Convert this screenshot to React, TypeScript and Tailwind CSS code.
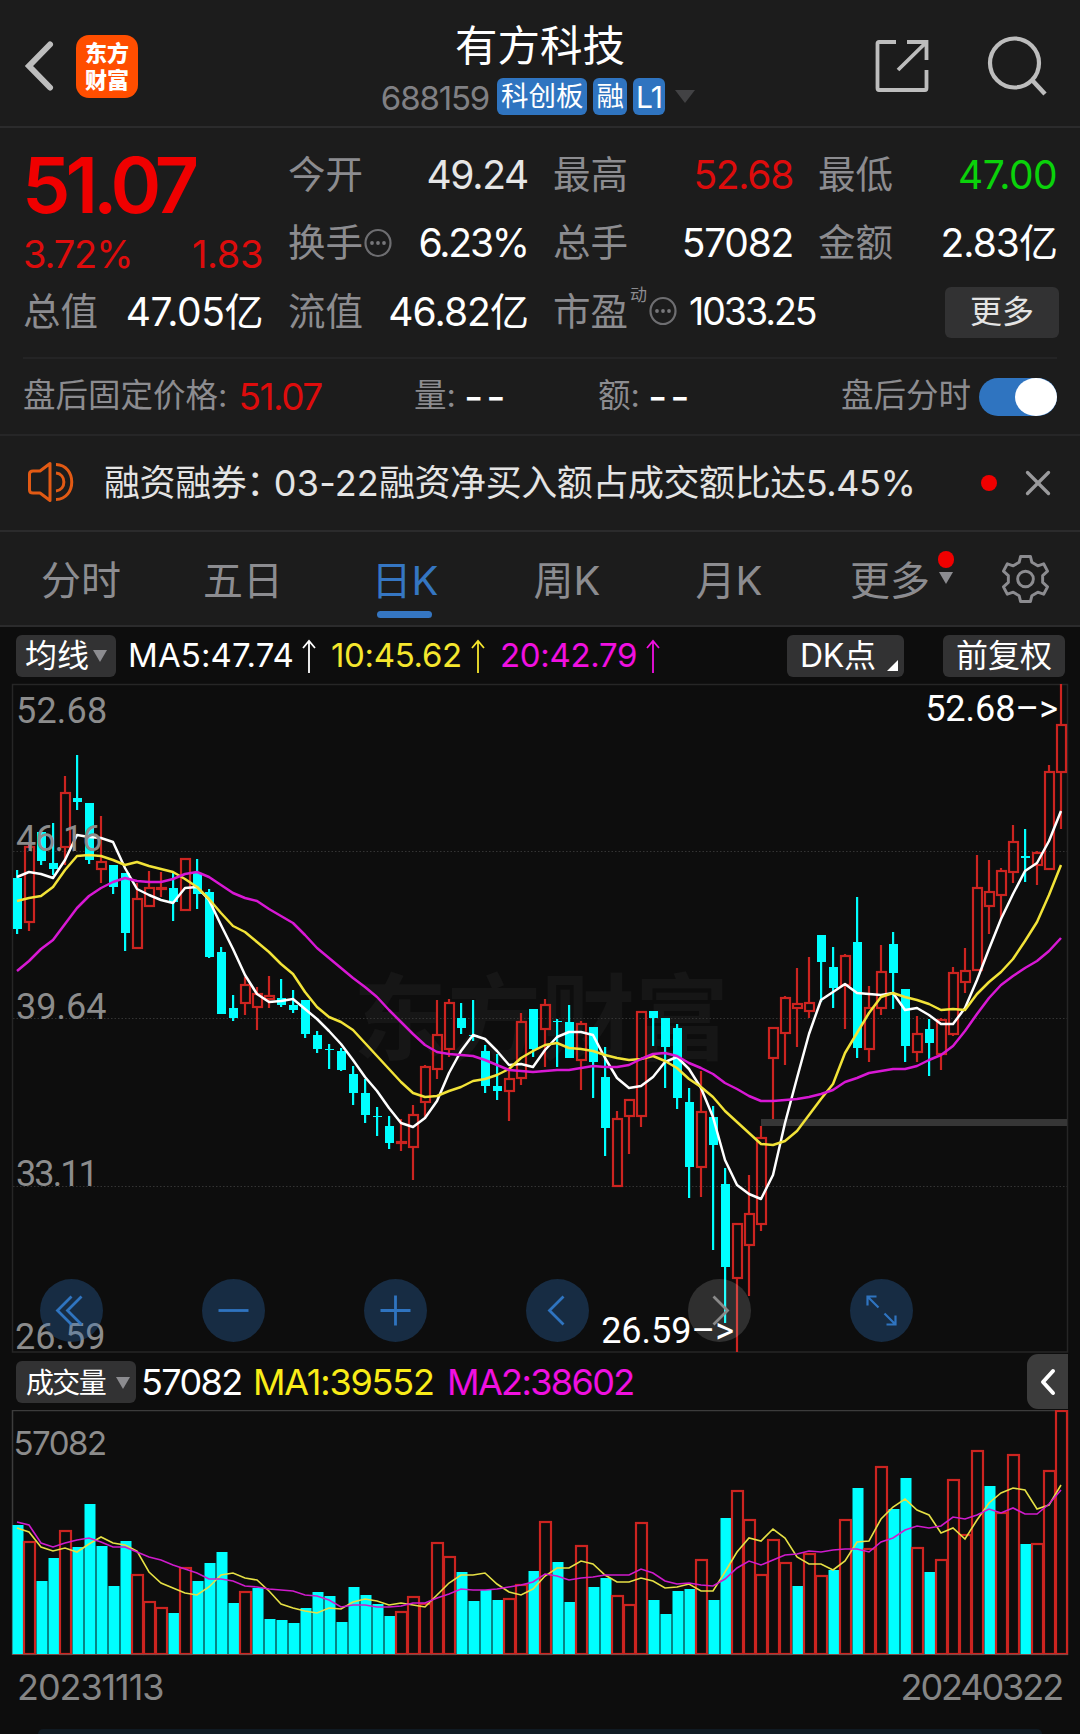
import { FiX } from "react-icons/fi";

// [direction, high, body top, body bottom, low, volume top]
const DAYS: [string, number, number, number, number, number][] = [
  ["d", 870, 878, 929, 934, 1525], ["u", 842, 847, 922, 931, 1542], ["d", 832, 832, 861, 865, 1581],
  ["d", 823, 863, 869, 875, 1558], ["u", 776, 793, 847, 865, 1531], ["d", 755, 798, 802, 810, 1547],
  ["d", 803, 803, 860, 864, 1504], ["u", 816, 862, 869, 883, 1546], ["d", 865, 865, 887, 894, 1586],
  ["d", 873, 873, 933, 951, 1541], ["u", 883, 899, 948, 949, 1575], ["u", 871, 888, 906, 906, 1602],
  ["u", 872, 888, 889, 897, 1608], ["d", 873, 888, 902, 921, 1613], ["u", 859, 859, 910, 910, 1568],
  ["d", 859, 873, 894, 909, 1581], ["d", 889, 892, 957, 958, 1563], ["d", 947, 952, 1014, 1014, 1552],
  ["d", 995, 1008, 1018, 1021, 1603], ["u", 977, 985, 1003, 1015, 1592], ["u", 987, 994, 1007, 1030, 1588],
  ["u", 976, 996, 999, 1008, 1619], ["d", 979, 998, 1005, 1007, 1620], ["d", 990, 1005, 1010, 1013, 1623],
  ["d", 1000, 1000, 1034, 1038, 1608], ["d", 1031, 1035, 1049, 1053, 1592], ["d", 1044, 1049, 1050, 1069, 1596],
  ["d", 1048, 1051, 1070, 1071, 1622], ["d", 1066, 1074, 1093, 1105, 1587], ["d", 1079, 1093, 1115, 1123, 1595],
  ["d", 1107, 1116, 1117, 1136, 1604], ["d", 1116, 1126, 1143, 1149, 1616], ["u", 1119, 1142, 1143, 1151, 1612],
  ["u", 1105, 1115, 1147, 1180, 1597], ["u", 1065, 1067, 1102, 1117, 1604], ["u", 1000, 1035, 1069, 1079, 1543],
  ["u", 999, 1003, 1049, 1057, 1557], ["d", 1003, 1018, 1028, 1034, 1572], ["d", 1000, 1035, 1036, 1041, 1601],
  ["d", 1045, 1051, 1086, 1093, 1590], ["d", 1054, 1086, 1091, 1100, 1600], ["u", 1070, 1079, 1091, 1121, 1599],
  ["u", 1013, 1022, 1078, 1085, 1585], ["d", 1009, 1009, 1049, 1057, 1571], ["u", 999, 1005, 1029, 1067, 1522],
  ["d", 1019, 1021, 1022, 1067, 1562], ["d", 1005, 1022, 1058, 1058, 1602], ["u", 1021, 1024, 1060, 1090, 1546],
  ["d", 1027, 1027, 1062, 1098, 1587], ["d", 1047, 1077, 1128, 1156, 1578], ["u", 1111, 1119, 1186, 1186, 1596],
  ["u", 1100, 1100, 1116, 1154, 1605], ["u", 1011, 1012, 1116, 1127, 1523], ["d", 1011, 1011, 1018, 1046, 1600],
  ["d", 1018, 1018, 1047, 1088, 1614], ["d", 1024, 1028, 1098, 1109, 1591], ["d", 1088, 1102, 1167, 1198, 1589],
  ["u", 1071, 1112, 1167, 1197, 1560], ["d", 1106, 1117, 1145, 1250, 1600], ["d", 1168, 1184, 1267, 1323, 1518],
  ["u", 1224, 1224, 1278, 1352, 1491], ["u", 1175, 1214, 1245, 1296, 1520], ["u", 1126, 1138, 1224, 1231, 1575],
  ["u", 1028, 1028, 1058, 1119, 1540], ["u", 996, 998, 1033, 1065, 1563], ["u", 968, 1004, 1008, 1047, 1586],
  ["u", 957, 1003, 1011, 1018, 1554], ["d", 935, 935, 962, 1002, 1576], ["d", 947, 967, 988, 1008, 1570],
  ["u", 954, 956, 985, 1029, 1520], ["d", 897, 942, 1048, 1058, 1488], ["u", 986, 1008, 1049, 1062, 1549],
  ["u", 945, 972, 1008, 1015, 1467], ["d", 932, 944, 973, 1009, 1509], ["d", 989, 989, 1046, 1062, 1478],
  ["u", 1016, 1034, 1052, 1062, 1548], ["d", 1019, 1029, 1043, 1076, 1572], ["u", 1018, 1020, 1054, 1070, 1560],
  ["u", 967, 973, 1034, 1036, 1480], ["u", 948, 971, 982, 993, 1535], ["u", 855, 888, 970, 970, 1451],
  ["u", 860, 892, 906, 934, 1486], ["u", 868, 871, 895, 920, 1513], ["u", 825, 842, 872, 883, 1455],
  ["d", 829, 856, 858, 882, 1544], ["u", 851, 853, 865, 885, 1544], ["u", 765, 772, 869, 869, 1471],
  ["u", 684, 725, 772, 829, 1411],
];

// volume bars are coloured by close against previous close, so they differ from the candles here and there
const VOLUME_DOWN = [
  0, 2, 3, 5, 6, 7, 8, 9, 13, 15, 16, 17, 18, 20, 21, 22, 23, 24, 25, 26, 27, 28, 29, 30, 31, 37, 38, 39, 40, 43,
  45, 46, 48, 49, 53, 54, 55, 56, 58, 59, 65, 68, 70, 73, 74, 76, 81, 84,
];

const MA5 = [
  877, 872, 874, 878, 860, 835, 837, 838, 842, 868, 889, 895, 900, 903, 888, 887, 900, 925, 949, 975, 994, 1002,
  1001, 999, 1009, 1019, 1031, 1044, 1060, 1077, 1091, 1108, 1123, 1127, 1118, 1101, 1073, 1051, 1035, 1039, 1051,
  1065, 1064, 1067, 1050, 1037, 1032, 1032, 1035, 1058, 1078, 1088, 1086, 1077, 1062, 1057, 1069, 1088, 1117, 1160,
  1185, 1194, 1199, 1175, 1123, 1078, 1034, 1000, 992, 984, 993, 994, 995, 993, 1010, 1008, 1015, 1024, 1024, 1008,
  980, 949, 919, 894, 871, 863, 841, 811,
];
const MA10 = [
  901, 898, 896, 887, 870, 856, 855, 856, 860, 865, 862, 866, 869, 872, 879, 887, 899, 913, 926, 932, 942, 952, 964,
  974, 992, 1007, 1017, 1022, 1030, 1043, 1056, 1069, 1082, 1093, 1097, 1096, 1091, 1087, 1081, 1079, 1075, 1069,
  1058, 1051, 1045, 1043, 1048, 1049, 1051, 1055, 1058, 1060, 1059, 1056, 1061, 1068, 1079, 1087, 1097, 1111, 1122,
  1133, 1144, 1145, 1141, 1131, 1115, 1099, 1084, 1053, 1033, 1013, 997, 993, 997, 1000, 1004, 1010, 1009, 1010, 994,
  982, 972, 959, 941, 922, 895, 865,
];
const MA20 = [
  971, 961, 949, 940, 924, 908, 896, 888, 882, 878, 881, 882, 882, 879, 874, 872, 877, 885, 893, 898, 901, 909, 916,
  923, 935, 948, 958, 968, 978, 987, 997, 1010, 1022, 1034, 1045, 1052, 1054, 1055, 1056, 1060, 1065, 1070, 1071,
  1072, 1071, 1070, 1070, 1068, 1066, 1067, 1067, 1065, 1059, 1054, 1053, 1056, 1063, 1068, 1074, 1083, 1089, 1096,
  1101, 1101, 1100, 1099, 1097, 1094, 1090, 1082, 1078, 1073, 1071, 1069, 1069, 1066, 1060, 1055, 1046, 1031, 1014,
  998, 985, 976, 968, 961, 951, 938,
];
const VOL_MA1 = [
  1528, 1532, 1547, 1551, 1548, 1552, 1544, 1537, 1543, 1545, 1551, 1572, 1583, 1588, 1593, 1595, 1587, 1575, 1573,
  1578, 1580, 1591, 1604, 1608, 1611, 1613, 1608, 1609, 1602, 1599, 1601, 1605, 1603, 1605, 1607, 1595, 1583, 1575,
  1575, 1573, 1584, 1592, 1595, 1589, 1576, 1568, 1568, 1561, 1564, 1575, 1582, 1582, 1578, 1581, 1588, 1587, 1584,
  1591, 1591, 1572, 1552, 1538, 1541, 1529, 1538, 1557, 1564, 1564, 1570, 1561, 1542, 1541, 1519, 1507, 1499, 1510,
  1515, 1533, 1528, 1539, 1520, 1503, 1493, 1488, 1490, 1509, 1505, 1485,
];
const VOL_MA2 = [
  1522, 1525, 1543, 1547, 1543, 1540, 1538, 1542, 1547, 1547, 1552, 1557, 1560, 1565, 1569, 1573, 1579, 1579, 1581,
  1586, 1587, 1589, 1590, 1591, 1595, 1596, 1600, 1607, 1605, 1605, 1607, 1607, 1606, 1603, 1603, 1598, 1594, 1589,
  1590, 1590, 1589, 1587, 1585, 1582, 1574, 1576, 1580, 1578, 1577, 1575, 1575, 1575, 1569, 1573, 1581, 1584, 1583,
  1585, 1586, 1579, 1568, 1561, 1565, 1560, 1555, 1554, 1551, 1552, 1550, 1549, 1549, 1552, 1542, 1538, 1530, 1526,
  1528, 1526, 1517, 1519, 1515, 1509, 1513, 1508, 1514, 1514, 1504, 1490,
];

const dayX = (i: number) => 17 + i * 12;
const linePoints = (values: number[]) => values.map((y, i) => `${dayX(i)},${y}`).join(" ");

const Header = () => (
  <header className="h-[128px] border-b-2 border-[#2b2b2c] flex relative">
    <svg className="ml-[22px] mt-[38px] shrink-0" width="36" height="56" viewBox="0 0 36 56">
      <path d="M28 6.500L7 28L28 49.500" fill="none" stroke="#bdbdbd" strokeWidth="6" strokeLinecap="round" />
    </svg>
    <div className="ml-[18px] mt-[35px] w-[62px] h-[63px] rounded-[13px] bg-[#ff4e00] flex flex-col items-center justify-center text-[22px] leading-[27px] font-black text-white">
      <span>东方</span>
      <span>财富</span>
    </div>
    <div className="absolute left-[340px] w-[400px] top-[15px] flex flex-col items-center">
      <h1 className="text-[42.500px] leading-[62px] text-white">有方科技</h1>
      <div className="flex items-center h-[38px] ml-[-4px]">
        <span className="text-[33px] leading-[36px] pt-[3px] tracking-[-0.035em] text-[#808084] mr-[8px]">688159</span>
        <span className="h-[37px] w-[90px] rounded-md bg-[#2f74c0] text-white text-[27.500px] leading-[37px] text-center mr-[6px]">
          科创板
        </span>
        <span className="h-[37px] w-[34px] rounded-md bg-[#2f74c0] text-white text-[27.500px] leading-[37px] text-center mr-[6px]">
          融
        </span>
        <span className="h-[37px] w-[32px] rounded-md bg-[#2f74c0] text-white text-[30px] leading-[38px] text-center tracking-tight">
          L1
        </span>
        <svg className="ml-[10px]" width="20" height="13">
          <path d="M0 0H20L10 13Z" fill="#424244" />
        </svg>
      </div>
    </div>
    <svg className="absolute left-[874px] top-[38px]" width="58" height="58" viewBox="0 0 58 58">
      <path
        d="M22 4H5Q3.500 4 3.500 5.500V50Q3.500 52 5 52H51Q52.500 52 52.500 50V32M33 4H52.500V22M52 4.500L24 32"
        fill="none"
        stroke="#bdbdbd"
        strokeWidth="3.800"
      />
    </svg>
    <svg className="absolute left-[986px] top-[34px]" width="64" height="64" viewBox="0 0 64 64">
      <circle cx="28.500" cy="29" r="24.500" fill="none" stroke="#bdbdbd" strokeWidth="4.200" />
      <path d="M46 46L59 60" stroke="#bdbdbd" strokeWidth="4.500" />
    </svg>
  </header>
);

const MoreDots = () => (
  <svg width="28" height="30" viewBox="0 0 28 30">
    <ellipse cx="14" cy="15" rx="12.500" ry="13" fill="none" stroke="#6e6e71" strokeWidth="2.200" />
    <circle cx="8" cy="15" r="1.900" fill="#77777a" />
    <circle cx="14" cy="15" r="1.900" fill="#77777a" />
    <circle cx="20" cy="15" r="1.900" fill="#77777a" />
  </svg>
);

const Stat = ({ label, value, color = "text-white", tracking = "tracking-[-0.033em]", dots = false }: any) => (
  <div className="flex items-center justify-between h-[68px] whitespace-nowrap">
    <span className="flex items-center text-[37.500px] text-[#8c8c90]">
      {label}
      {dots && <span className="ml-px"><MoreDots /></span>}
    </span>
    <span className={`text-[39px] ${tracking} ${color}`}>{value}</span>
  </div>
);

const Quote = () => (
  <section className="h-[229px] px-[23px]">
    <div className="pt-[13px] grid grid-cols-[240px_240px_240px_239px] gap-x-[25px]">
      <div className="h-[137px]">
        <div className="-ml-[1px] pt-px text-[77px] leading-[86px] font-semibold tracking-[-0.065em] text-[#f00000]">51.07</div>
        <div className="flex justify-between mt-[1px] text-[38px] leading-[50px] text-[#dd0c0c]">
          <span className="tracking-[-0.03em]">3.72%</span>
          <span className="tracking-[-0.01em]">1.83</span>
        </div>
      </div>
      <div>
        <Stat label="今开" value="49.24" color="text-[#e6e6e6]" />
        <Stat label="换手" value="6.23%" tracking="tracking-[-0.055em]" dots />
      </div>
      <div>
        <Stat label="最高" value="52.68" color="text-[#dd0c0c]" />
        <Stat label="总手" value="57082" />
      </div>
      <div>
        <Stat label="最低" value="47.00" color="text-[#0ad20a]" tracking="tracking-[-0.015em]" />
        <Stat label="金额" value="2.83亿" tracking="tracking-[-0.025em]" />
      </div>
      <Stat label="总值" value="47.05亿" tracking="tracking-[-0.012em]" />
      <Stat label="流值" value="46.82亿" tracking="tracking-[-0.024em]" />
      <div className="flex items-center h-[68px] whitespace-nowrap relative">
        <span className="text-[37.500px] text-[#8c8c90]">市盈</span>
        <span className="absolute left-[77px] top-[5px] text-[17px] leading-[24px] text-[#8c8c90]">动</span>
        <span className="ml-[21px] -mt-[2px]">
          <MoreDots />
        </span>
        <span className="ml-[12px] text-[37.500px] tracking-[-0.055em] text-white">1033.25</span>
      </div>
      <div className="flex justify-end items-center h-[68px]">
        <button type="button" className="-mr-[2px] w-[114px] h-[51px] rounded-md bg-[#323233] text-[32px] text-[#e4e4e4]">
          更多
        </button>
      </div>
    </div>
  </section>
);

const AfterHours = () => (
  <section className="mx-[23px] h-[77px] border-t-2 border-[#242425] flex items-center text-[32.500px] text-[#8c8c90] whitespace-nowrap">
    <div className="w-[391px] flex items-center">
      盘后固定价格:
      <span className="ml-[11px] text-[37px] tracking-[-0.04em] text-[#dd0c0c]">51.07</span>
    </div>
    <div className="w-[184px] flex items-center">
      量:<span className="ml-[8px] text-[42px] tracking-[0.07em] leading-none text-white">--</span>
    </div>
    <div className="flex items-center">
      额:<span className="ml-[8px] text-[42px] tracking-[0.07em] leading-none text-white">--</span>
    </div>
    <div className="ml-auto flex items-center">
      盘后分时
      <div className="ml-[8px] w-[78px] h-[38px] rounded-full bg-[#2f74c0] flex justify-end">
        <div className="w-[42px] h-[38px] rounded-[50%] bg-white" />
      </div>
    </div>
  </section>
);

const News = () => (
  <section className="h-[98px] border-y-2 border-[#262627] border-b-[#2b2b2c] flex items-center whitespace-nowrap">
    <svg className="ml-[26px] -mt-[3px]" width="50" height="44" viewBox="0 0 50 44" fill="none" stroke="#e25a14" strokeWidth="3">
      <path d="M24 3.500V40.500L14 33H7Q3.500 33 3.500 30V14Q3.500 11 7 11H14Z" strokeLinejoin="round" />
      <path d="M30 4.500C51 5 51 39 30 39.500M30 13C40.500 14 40.500 30 30 31" />
    </svg>
    <span className="ml-[28px] w-[813px] text-[36px] tracking-[-0.012em] text-[#e4e4e4]">
      融资融券<span className="-mr-[8px]">：</span>
      <span className="tracking-[0.005em]">03-22</span>融资净买入额占成交额比达5.45%
    </span>
    <span className="ml-[64px] w-4 h-4 rounded-full bg-[#f00000]" />
    <FiX className="ml-[20px] w-[42px] h-[42px] text-[#9a9a9c]" strokeWidth={1.9} />
  </section>
);

const Tabs = () => (
  <nav className="h-[95px] border-b-2 border-[#2b2b2c] flex items-center text-[40px] text-[#8c8c90] whitespace-nowrap">
    {["分时", "五日", "日K", "周K", "月K"].map((item: any, index: number) => (
      <button
        key={index}
        type="button"
        className={`relative w-[162px] h-full pt-1 ${index === 2 ? "text-[#3576c2]" : ""}`}
      >
        {item}
        {index === 2 && <span className="absolute left-[53px] bottom-[7px] w-[55px] h-[7px] rounded-full bg-[#3576c2]" />}
      </button>
    ))}
    <button type="button" className="relative ml-[40px] h-full pt-1 flex items-center">
      更多
      <svg className="ml-[9px] mb-[6px]" width="14" height="12">
        <path d="M0 0H14L7 12Z" fill="#8c8c90" />
      </svg>
      <span className="absolute left-[88px] top-[19px] w-4 h-[17px] rounded-full bg-[#f00000]" />
    </button>
    <svg className="ml-[48px]" width="49" height="52" viewBox="-25 -26 50 52" fill="none" stroke="#8c8c90" strokeWidth="3">
      <path
        d="M-5 -23H5L6.500 -17L12.500 -13.500L18.500 -15.500L22.500 -8L17.500 -3.500V3.500L22.500 8L18.500 15.500L12.500 13.500L6.500 17L5 23H-5L-6.500 17L-12.500 13.500L-18.500 15.500L-22.500 8L-17.500 3.500V-3.500L-22.500 -8L-18.500 -15.500L-12.500 -13.500L-6.500 -17Z"
        strokeLinejoin="round"
      />
      <circle r="8" />
    </svg>
  </nav>
);

const UpArrow = () => (
  <svg width="14" height="34" viewBox="0 0 14 34" fill="none" stroke="currentColor" strokeWidth="1.800">
    <path d="M7 34V3M1 9L7 2L13 9" />
  </svg>
);

const AverageBar = () => (
  <div className="h-[57px] pl-4 pr-[15px] flex items-center text-[33px] tracking-[-0.01em] text-white whitespace-nowrap">
    <button type="button" className="w-[100px] h-[42px] rounded-md bg-[#323233] pl-[9px] flex items-center text-[32px] tracking-normal">
      均线
      <svg className="ml-[4px]" width="14" height="12">
        <path d="M0 0H14L7 12Z" fill="#8c8c90" />
      </svg>
    </button>
    <div className="ml-[12px] w-[203px] pt-px flex items-center justify-between pr-[15px] tracking-[0.003em]">
      MA5:47.74 <UpArrow />
    </div>
    <div className="w-[169px] pt-px flex items-center justify-between pr-[15px] text-[#f5e62d]">
      10:45.62 <UpArrow />
    </div>
    <div className="w-[160px] pt-px flex items-center justify-between text-[#f010e0]">
      20:42.79 <UpArrow />
    </div>
    <button type="button" className="relative ml-auto w-[117px] h-[42px] rounded-md bg-[#323233] pl-[13px] flex items-center text-[32px]">
      DK点
      <svg className="absolute right-[6px] bottom-[6px]" width="11" height="11">
        <path d="M11 0V11H0Z" fill="#fff" />
      </svg>
    </button>
    <button type="button" className="ml-[39px] w-[122px] h-[42px] rounded-md bg-[#323233] text-[32px] leading-[42px] tracking-normal">
      前复权
    </button>
  </div>
);

const CONTROLS = [
  "M0 -14L-14 0L0 14M10 -14L-4 0L10 14",
  "M-15 0H15",
  "M-15 0H15M0 -15V15",
  "M6 -14L-8 0L6 14",
  "M-6 -14L8 0L-6 14",
  "M-14 -5V-14H-5M-14 -14L-3 -3M14 5V14H5M14 14L3 3",
];

const PriceChart = () => (
  <div className="relative h-[669px]">
    <svg className="block overflow-visible" width="1080" height="669" viewBox="0 684 1080 669" fontFamily="Roboto, sans-serif" fontSize="36">
      <text
        x="353"
        y="1053"
        fontFamily="'Noto Sans CJK SC', sans-serif"
        fontSize="94"
        fontWeight="700"
        fill="#161616"
      >
        东方财富
      </text>
      {[851.5, 1018.5, 1186.5].map((y) => (
        <path key={y} d={`M13 ${y}H1067`} stroke="#343434" strokeDasharray="1.500 2" />
      ))}
      <rect x="12.500" y="684.500" width="1055" height="667.500" fill="none" stroke="#262626" strokeWidth="1.500" />
      <rect x="761" y="1119" width="306" height="7" fill="#363636" />
      {DAYS.map(([dir, high, top, bottom, low], i) => {
        const x = dayX(i);
        return dir === "d" ? (
          <g key={i} fill="#00ffff">
            <rect x={x - 1} y={high} width="2.200" height={low - high} />
            <rect x={x - 4} y={top} width="9" height={Math.max(bottom - top, 1)} />
          </g>
        ) : (
          <g key={i} fill="none" stroke="#cc2420" strokeWidth="2.200">
            <path d={`M${x} ${high}V${top}M${x} ${bottom}V${low}`} />
            <rect x={x - 4} y={top} width="9" height={bottom - top} />
          </g>
        );
      })}
      <g fill="none" strokeWidth="2.500" strokeLinejoin="round">
        <polyline points={linePoints(MA5)} stroke="#fff" />
        <polyline points={linePoints(MA10)} stroke="#f2e338" />
        <polyline points={linePoints(MA20)} stroke="#d818d4" />
      </g>
      <g fill="#8c8c8c">
        <text x="16" y="723" letterSpacing="0.200">52.68</text>
        <text x="16" y="850.500" letterSpacing="-1">46.16</text>
        <text x="16" y="1019">39.64</text>
        <text x="16" y="1186" letterSpacing="-1.900">33.11</text>
        <text x="15" y="1349">26.59</text>
      </g>
      <g fill="#fff">
        <text x="1058" y="721" textAnchor="end">52.68–&gt;</text>
        <text x="734" y="1343" textAnchor="end">26.59–&gt;</text>
      </g>
    </svg>
    <div className="absolute left-[40px] bottom-[11px] flex gap-[99px]">
      {CONTROLS.map((d, i) => (
        <button
          key={i}
          type="button"
          className={`w-[63px] h-[63px] rounded-full ${i === 4 ? "bg-white/[0.14] text-[#8a8a8a]" : "bg-[#2f74c0]/30 text-[#2f74c0]"}`}
        >
          <svg width="63" height="63" viewBox="-31.500 -31.500 63 63" fill="none" stroke="currentColor" strokeWidth={i === 5 ? 2.2 : 2.8}>
            <path d={d} />
          </svg>
        </button>
      ))}
    </div>
  </div>
);

const VolumeBar = () => (
  <div className="h-[57px] pl-4 pr-3 flex items-center text-[36px] tracking-[-0.045em] whitespace-nowrap">
    <button type="button" className="w-[120px] h-[42px] rounded-md bg-[#323233] text-white pl-[10px] pt-[2px] flex items-center text-[28px] tracking-[-0.06em]">
      成交量
      <svg className="ml-[11px]" width="14" height="12">
        <path d="M0 0H14L7 12Z" fill="#8c8c90" />
      </svg>
    </button>
    <span className="ml-[5px] w-[112px] text-white">57082</span>
    <span className="w-[194px] tracking-[-0.033em] text-[#f9ec18]">MA1:39552</span>
    <span className="text-[#f010e0]">MA2:38602</span>
    <button type="button" className="ml-auto w-[41px] h-[55px] rounded-l-[11px] bg-[#3c3c3c] flex items-center justify-center">
      <svg width="18" height="28" viewBox="0 0 18 28">
        <path d="M14 3L4 14L14 25" fill="none" stroke="#fff" strokeWidth="4" strokeLinecap="round" strokeLinejoin="round" />
      </svg>
    </button>
  </div>
);

const VolumeChart = () => (
  <svg className="block" width="1080" height="246" viewBox="0 1410 1080 246">
    <path d="M12.500 1655V1410.500H1067.500V1655" fill="none" stroke="#3c3c3c" strokeWidth="1.500" />
    {DAYS.map((day, i) =>
      VOLUME_DOWN.includes(i) ? (
        <rect key={i} x={dayX(i) - 4.5} y={day[5]} width="11" height={1654 - day[5]} fill="#00ffff" />
      ) : (
        <rect key={i} x={dayX(i) - 5} y={day[5]} width="11" height={1654 - day[5]} fill="none" stroke="#cc2420" strokeWidth="2.200" />
      )
    )}
    <path d="M12 1654.500H1068" stroke="#7a4a46" strokeWidth="1" />
    <g fill="none" strokeWidth="1.600">
      <polyline points={linePoints(VOL_MA1)} stroke="#e6e045" />
      <polyline points={linePoints(VOL_MA2)} stroke="#cf1bcc" />
    </g>
    <text x="13.500" y="1455" fontSize="33" letterSpacing="-1.500" fill="#8c8c8c">
      57082
    </text>
  </svg>
);

const App = () => {
  return (
    <div className="w-[1080px] h-[1734px] overflow-hidden flex flex-col bg-[#1c1c1c] font-[Inter,'Noto_Sans_CJK_SC',sans-serif]">
      <Header />
      <Quote />
      <AfterHours />
      <News />
      <Tabs />
      <main className="flex-1 bg-[#0d0d0d] flex flex-col">
        <AverageBar />
        <PriceChart />
        <VolumeBar />
        <VolumeChart />
        <div className="flex justify-between pl-[17px] pr-[18px] pt-[8px] text-[36px] leading-[46px] text-[#858585]">
          <span className="tracking-[-0.03em]">20231113</span>
          <span className="tracking-[-0.058em]">20240322</span>
        </div>
        <div className="mt-auto mx-[38px] h-[5px] rounded-t-[10px] bg-[#101a22]" />
      </main>
    </div>
  );
};

export default App;
